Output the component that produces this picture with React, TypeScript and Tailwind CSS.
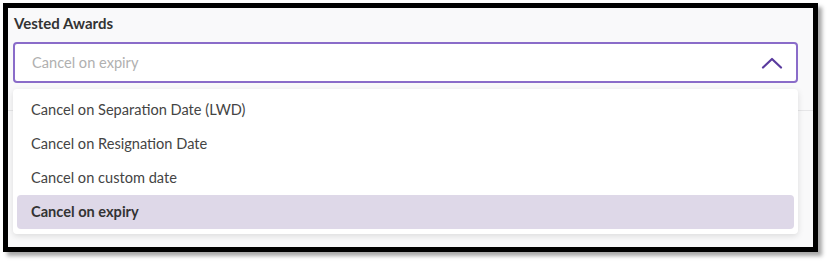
import React from 'react';

const options = [
  'Cancel on Separation Date (LWD)',
  'Cancel on Resignation Date',
  'Cancel on custom date',
  'Cancel on expiry',
];

const App: React.FC = () => {
  const selected = 'Cancel on expiry';

  return (
    <div className="w-[829px] h-[263px] bg-white pt-[3px] pl-[3px]" style={{ fontFamily: 'Lato, "Open Sans", sans-serif' }}>
      <div className="w-[815px] h-[249px] border-[5px] border-black bg-[#f9f9fa] shadow-[4px_4px_4px_rgba(0,0,0,0.35)] relative overflow-hidden">
        {/* faint rows behind the menu */}
        <div className="absolute left-0 right-0 top-[102px] h-px bg-[#e6e6e8]" />

        <div className="pl-[5px] pr-[15px] pt-[5px] relative">
          <div className="pl-[1px] text-[15px] font-bold text-[#333] leading-[20px]">Vested Awards</div>

          <div className="mt-[9px] h-[41px] rounded-[4px] border-2 border-[#8a6cc9] bg-white flex items-center justify-between pl-[17px] pr-[13px]">
            <span className="text-[14.6px] text-[#b0b0b0]">Cancel on expiry</span>
            <svg width="22" height="12" viewBox="0 0 22 12" fill="none">
              <path d="M2 10.5 L11 2 L20 10.5" stroke="#5a3b9e" strokeWidth="2.2" strokeLinecap="round" strokeLinejoin="round" />
            </svg>
          </div>

          <div className="mt-[6px] bg-white rounded-[4px] shadow-[0_2px_6px_rgba(0,0,0,0.12)] p-[4px] pb-[5px]">
            {options.map((o) => (
              <div
                key={o}
                className={`h-[34px] flex items-center pl-[14px] rounded-[4px] text-[14.6px] ${
                  o === selected ? 'bg-[#ded8e8] font-bold text-[#333]' : 'text-[#444]'
                }`}
              >
                {o}
              </div>
            ))}
          </div>
        </div>
      </div>
    </div>
  );
};

export default App;
